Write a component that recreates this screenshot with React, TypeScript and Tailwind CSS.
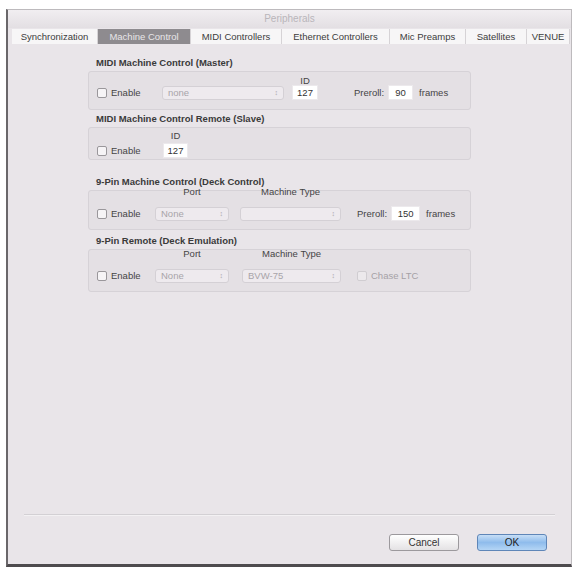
import React from 'react';

const font = { fontFamily: '"Liberation Sans", "DejaVu Sans", Arial, sans-serif' };

const tabs = [
    { label: 'Synchronization', w: 'w-[86px]' },
    { label: 'Machine Control', w: 'w-[93px]', active: true },
    { label: 'MIDI Controllers', w: 'w-[91px]' },
    { label: 'Ethernet Controllers', w: 'w-[108px]' },
    { label: 'Mic Preamps', w: 'w-[76px]' },
    { label: 'Satellites', w: 'w-[61px]' },
    { label: 'VENUE', w: 'w-[43px]' },
];

function Checkbox({ dim = false }: { dim?: boolean }) {
    return (
        <span
            className={`inline-block w-[10px] h-[10px] rounded-[2px] border shrink-0 ${
                dim ? 'border-[#d0cdd1] bg-[#ece9ec]' : 'border-[#9a979b] bg-[#f6f4f6]'
            }`}
        />
    );
}

/** A control slot: optional caption above, control on a 15px line below. */
function Col({
    label,
    gap = 'gap-[3px]',
    className = '',
    children,
}: {
    label?: string;
    gap?: string;
    className?: string;
    children: React.ReactNode;
}) {
    return (
        <div className={`flex flex-col items-center ${gap} ${className}`}>
            {label !== undefined && <span className="h-[9px] text-[#444]">{label}</span>}
            <div className="h-[15px] w-full flex items-center">{children}</div>
        </div>
    );
}

function Enable({ w }: { w: string }) {
    return (
        <Col className={w}>
            <div className="flex items-center gap-[4px]">
                <Checkbox />
                <span className="text-[#444]">Enable</span>
            </div>
        </Col>
    );
}

function Select({ value }: { value: string }) {
    return (
        <div className="w-full h-[14px] flex items-center justify-between rounded-[3px] border border-[#d4d0d5] bg-[#eeeaee] px-[5px] text-[#a8a4a9]">
            <span>{value}</span>
            <span className="text-[7px] leading-none">↕</span>
        </div>
    );
}

function Field({ value }: { value: string }) {
    return (
        <div className="w-full h-[15px] flex items-center justify-center bg-white border border-[#ece9ec] text-[#333]">
            {value}
        </div>
    );
}

function Preroll({ value, gap, fieldW }: { value: string; gap: string; fieldW: string }) {
    return (
        <div className={`h-[15px] flex items-center text-[#444] ${gap}`}>
            <span>Preroll:</span>
            <div className={`${fieldW} ml-[4px]`}>
                <Field value={value} />
            </div>
            <span className="ml-[6px]">frames</span>
        </div>
    );
}

function Group({
    title,
    mt = '',
    className,
    children,
}: {
    title: string;
    mt?: string;
    className: string;
    children: React.ReactNode;
}) {
    return (
        <div className={`flex flex-col ${mt}`}>
            <div className="h-[13px] pl-[8px] text-[#3a3a3a] font-semibold">{title}</div>
            <div className={`w-[383px] rounded-[3px] border border-[#d6d2d7] bg-[#e4e0e4] pl-[8px] flex items-end ${className}`}>
                {children}
            </div>
        </div>
    );
}

export default function App() {
    return (
        <div className="w-[576px] h-[570px] bg-white pt-[9px] pl-[6px] text-[9.5px] leading-none" style={font}>
            <div className="w-[566px] h-[558px] flex flex-col bg-[#e9e5e9] border-t border-r border-[#bdbabd] border-l-2 border-b-[3px] border-l-[#6a676a] border-b-[#4e4b4e]">
                <div className="h-[18px] flex items-center justify-center bg-gradient-to-b from-[#f1eef1] to-[#e3dfe3] text-[#b9b5ba] text-[10px]">
                    Peripherals
                </div>
                <div className="h-[15px] mt-[1px] flex pl-[4px] text-[#3c3c3c]">
                    {tabs.map((t) => (
                        <div
                            key={t.label}
                            className={`${t.w} h-full flex items-center justify-center border-r border-[#d6d3d6] ${
                                t.active ? 'bg-[#8e8b8f] text-[#e8e6e8]' : 'bg-[#f7f6f7]'
                            }`}
                        >
                            {t.label}
                        </div>
                    ))}
                </div>
                <div className="flex-1 flex flex-col pl-[80px] pt-[14px]">
                    <Group title="MIDI Machine Control (Master)" className="h-[39px] pb-[9px]">
                        <Enable w="w-[65px]" />
                        <Col className="w-[122px]">
                            <Select value="none" />
                        </Col>
                        <Col label="ID" gap="gap-0" className="w-[26px] ml-[8px]">
                            <Field value="127" />
                        </Col>
                        <Preroll value="90" gap="ml-[36px]" fieldW="w-[25px]" />
                    </Group>
                    <Group title="MIDI Machine Control Remote (Slave)" mt="mt-[4px]" className="h-[33px] pb-[1px]">
                        <Enable w="w-[66px]" />
                        <Col label="ID" className="w-[25px]">
                            <Field value="127" />
                        </Col>
                    </Group>
                    <Group title="9-Pin Machine Control (Deck Control)" mt="mt-[17px]" className="h-[40px] pb-[8px]">
                        <Enable w="w-[58px]" />
                        <Col label="Port" gap="gap-[10px]" className="w-[74px]">
                            <Select value="None" />
                        </Col>
                        <Col label="Machine Type" gap="gap-[10px]" className="w-[101px] ml-[11px]">
                            <Select value="" />
                        </Col>
                        <Preroll value="150" gap="ml-[16px]" fieldW="w-[29px]" />
                    </Group>
                    <Group title="9-Pin Remote (Deck Emulation)" mt="mt-[6px]" className="h-[43px] pb-[8px]">
                        <Enable w="w-[58px]" />
                        <Col label="Port" gap="gap-[10px]" className="w-[74px]">
                            <Select value="None" />
                        </Col>
                        <Col label="Machine Type" gap="gap-[10px]" className="w-[99px] ml-[13px]">
                            <Select value="BVW-75" />
                        </Col>
                        <div className="h-[15px] ml-[16px] flex items-center gap-[4px]">
                            <Checkbox dim />
                            <span className="text-[#a5a1a6]">Chase LTC</span>
                        </div>
                    </Group>
                </div>
                <div className="mx-[16px] h-[2px] bg-[#d3d0d4] border-b border-[#f3f1f3]" />
                <div className="h-[48px] flex justify-end items-start pt-[18px] pr-[24px] gap-[18px]">
                    <div className="w-[70px] h-[17px] flex items-center justify-center rounded-[3px] border border-[#9c999d] bg-gradient-to-b from-white to-[#e4e2e4] text-[#333] text-[10px]">
                        Cancel
                    </div>
                    <div className="w-[70px] h-[17px] flex items-center justify-center rounded-[3px] border border-[#5f86b8] bg-gradient-to-b from-[#c7def6] via-[#8fbcec] to-[#b4d5f5] text-[#222] text-[10px]">
                        OK
                    </div>
                </div>
            </div>
        </div>
    );
}
